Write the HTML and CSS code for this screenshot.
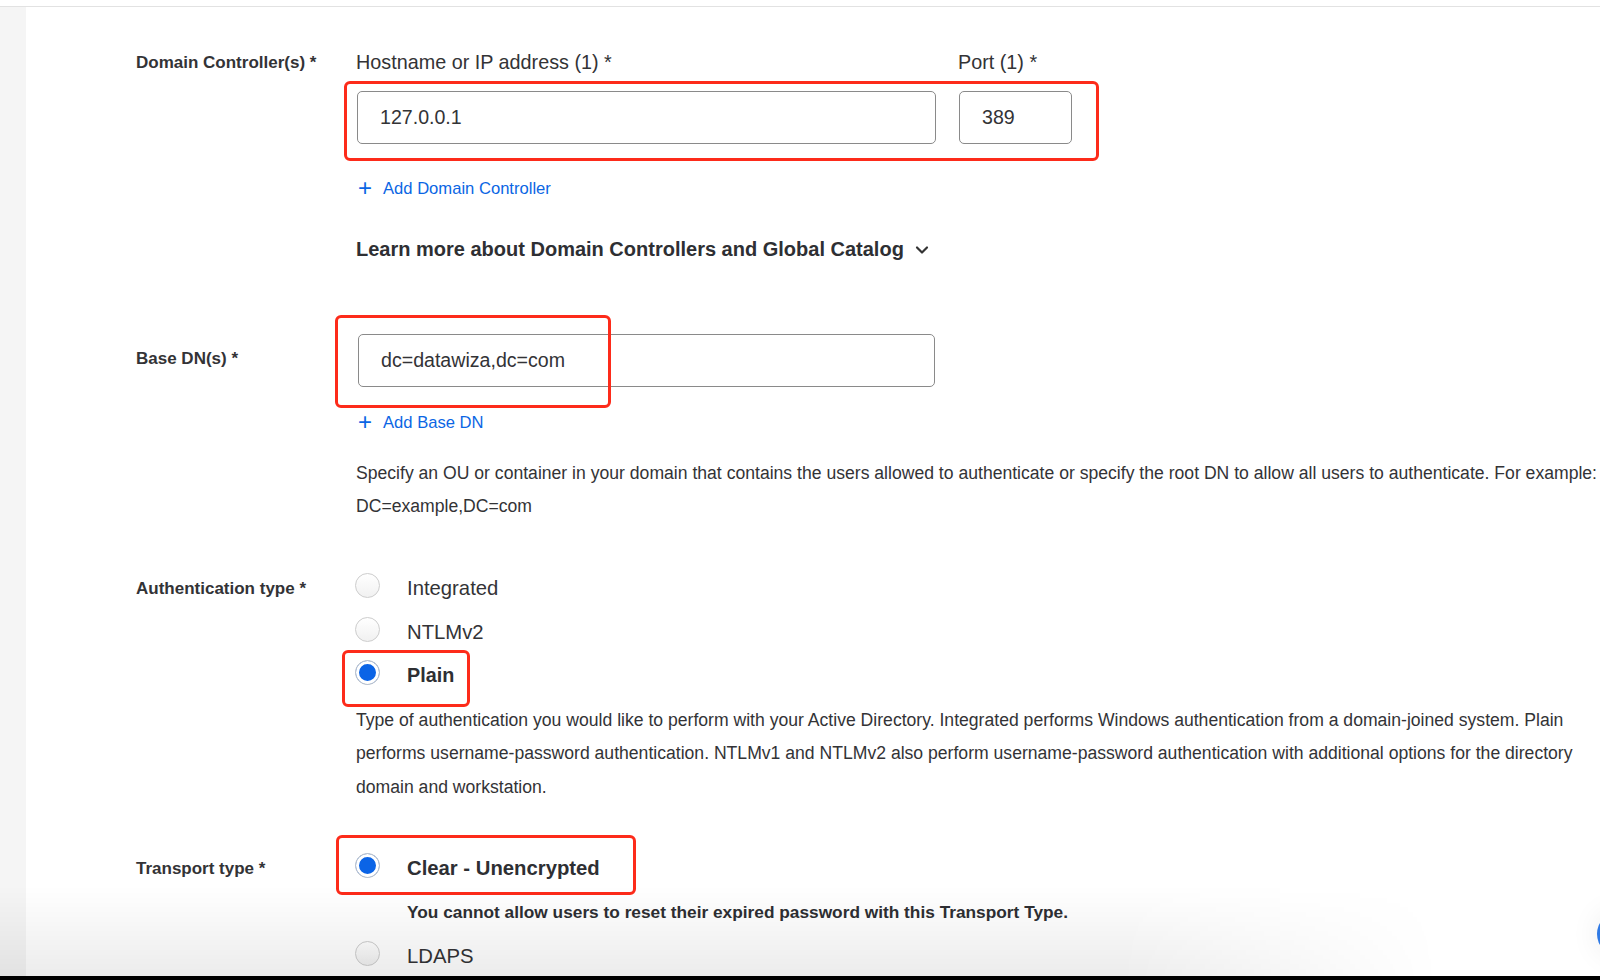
FILE: index.html
```html
<!DOCTYPE html>
<html lang="en">
<head>
<meta charset="utf-8">
<title>Active Directory settings</title>
<link rel="stylesheet" href="styles.css">
</head>
<body>
<div class="screen">
  <div class="topbar"></div>
  <div class="page">
    <aside class="sidebar"></aside>
    <main class="main">
      <form class="form">
        <div class="row row-dc">
          <div class="label label-dc">Domain Controller(s) *</div>
          <div class="field">
            <div class="dc-labels">
              <span class="field-label host-col">Hostname or IP address (1) *</span>
              <span class="field-label port-col">Port (1) *</span>
            </div>
            <div class="dc-inputs">
              <div class="input host-col">127.0.0.1</div>
              <div class="input port-col">389</div>
              <span class="anno anno-dc"></span>
            </div>
            <a class="add-link add-dc"><span class="plus">+</span>Add Domain Controller</a>
            <div class="learn">Learn more about Domain Controllers and Global Catalog
              <svg class="chev" width="14" height="10" viewBox="0 0 14 10"><path d="M2 2.5 L7 7.5 L12 2.5" fill="none" stroke="#333" stroke-width="2.2" stroke-linecap="round" stroke-linejoin="round"/></svg>
            </div>
          </div>
        </div>

        <div class="row row-dn">
          <div class="label label-dn">Base DN(s) *</div>
          <div class="field">
            <div class="dn-wrap">
              <div class="input dn-input">dc=datawiza,dc=com</div>
              <span class="anno anno-dn"></span>
            </div>
            <a class="add-link add-dn"><span class="plus">+</span>Add Base DN</a>
            <p class="help help-dn">Specify an OU or container in your domain that contains the users allowed to authenticate or specify the root DN to allow all users to authenticate. For example: DC=example,DC=com</p>
          </div>
        </div>

        <div class="row row-auth">
          <div class="label label-opt">Authentication type *</div>
          <div class="field">
            <div class="option"><span class="radio"></span><span class="opt-text">Integrated</span></div>
            <div class="option"><span class="radio"></span><span class="opt-text">NTLMv2</span></div>
            <div class="option selected"><span class="radio checked"></span><span class="opt-text">Plain</span><span class="anno anno-plain"></span></div>
            <p class="help help-auth">Type of authentication you would like to perform with your Active Directory. Integrated performs Windows authentication from a domain-joined system. Plain performs username-password authentication. NTLMv1 and NTLMv2 also perform username-password authentication with additional options for the directory domain and workstation.</p>
          </div>
        </div>

        <div class="row row-transport">
          <div class="label label-opt">Transport type *</div>
          <div class="field">
            <div class="option selected"><span class="radio checked"></span><span class="opt-text">Clear - Unencrypted</span><span class="anno anno-clear"></span></div>
            <div class="warning">You cannot allow users to reset their expired password with this Transport Type.</div>
            <div class="option option-last"><span class="radio"></span><span class="opt-text">LDAPS</span></div>
          </div>
        </div>
      </form>
    </main>
  </div>
  <div class="bottom-shade"></div>
  <div class="help-fab"></div>
  <div class="screen-edge"></div>
</div>
</body>
</html>
```

FILE: styles.css
```css
* { box-sizing: border-box; }

html, body {
  margin: 0;
  padding: 0;
  background: #ffffff;
}

body {
  font-family: "Liberation Sans", Arial, Helvetica, sans-serif;
  color: #333336;
}

.screen {
  position: relative;
  width: 1600px;
  height: 980px;
  overflow: hidden;
  background: #ffffff;
}

.topbar {
  height: 7px;
  border-bottom: 1px solid #e2e2e2;
}

.page {
  display: flex;
  height: 973px;
}

.sidebar {
  width: 26px;
  flex: none;
  background: #f5f5f5;
}

.main {
  flex: 1;
  min-width: 0;
}

.form {
  padding: 44px 0 0 110px;
  margin: 0;
}

.row {
  display: grid;
  grid-template-columns: 220px 1fr;
}

.label {
  font-size: 17px;
  font-weight: 700;
  line-height: 22px;
  color: #333336;
}

.label-dc { padding-top: 1px; }

.field {
  min-width: 0;
}

/* Domain controllers */
.dc-labels,
.dc-inputs {
  display: flex;
  gap: 23px;
}

.dc-inputs {
  position: relative;
  margin-top: 18px;
  width: 716px;
}

.field-label {
  font-size: 19.8px;
  line-height: 22px;
  color: #333336;
  white-space: nowrap;
}

.host-col { width: 579px; flex: none; }
.port-col { width: 113px; flex: none; }

.input {
  height: 53px;
  border: 1px solid #8a8a8a;
  border-radius: 5px;
  padding: 0 0 0 22px;
  display: flex;
  align-items: center;
  font-size: 19.6px;
  color: #333336;
  background: #fff;
}

.dc-inputs .host-col { margin-left: 1px; }

.add-link {
  display: flex;
  align-items: center;
  gap: 9px;
  color: #0b66e4;
  font-size: 16.6px;
  line-height: 20px;
  text-decoration: none;
}

.plus {
  font-size: 24px;
  font-weight: 300;
  line-height: 20px;
  width: 16px;
  margin-left: 2px;
  margin-top: -2px;
}

.add-dc { margin-top: 35px; }

.learn {
  margin-top: 38px;
  font-size: 20px;
  font-weight: 700;
  line-height: 24px;
  color: #2e2f33;
  display: flex;
  align-items: center;
  gap: 11px;
  white-space: nowrap;
}

.chev { margin-top: 2px; }

/* Base DN */
.row-dn { margin-top: 73px; }

.label-dn { padding-top: 14px; }

.dn-wrap {
  position: relative;
  width: 579px;
  padding-left: 2px;
}

.dn-input { width: 577px; }

.add-dn { margin-top: 26px; }

.help {
  margin: 0;
  font-size: 17.6px;
  line-height: 33px;
  color: #333336;
  margin-right: -10px;
}

.help-dn { margin-top: 24px; }

/* Options */
.row-auth { margin-top: 44px; }

.label-opt { line-height: 43px; }

.option {
  position: relative;
  display: flex;
  align-items: center;
  height: 43.5px;
  font-size: 20.3px;
  color: #333336;
  white-space: nowrap;
}

.option.selected .opt-text { font-weight: 700; color: #2e2f33; }
.row-auth .option.selected .opt-text { font-size: 19.8px; }

.radio {
  width: 25px;
  height: 25px;
  border-radius: 50%;
  border: 1px solid #cdcdcd;
  background: linear-gradient(#ffffff, #f1f1f1);
  margin-bottom: 6px;
  margin-left: -1px;
  flex: none;
}

.radio.checked {
  background: #0b64e6;
  border-color: #c9c9c9;
  box-shadow: inset 0 0 0 3px #ffffff;
}

.opt-text { margin-left: 27px; }

.help-auth { margin-top: 6px; line-height: 33.5px; }

.row-transport { margin-top: 42px; }
.row-transport .label-opt { line-height: 44px; padding-top: 1px; }
.row-transport .option { height: 44px; }

.warning {
  margin-top: 11px;
  margin-left: 51px;
  font-size: 17.3px;
  font-weight: 700;
  line-height: 22px;
  color: #2e2f33;
  white-space: nowrap;
}

.option-last { margin-top: 11px; }

/* Red annotation boxes drawn over the form */
.anno {
  position: absolute;
  border: 3px solid #fd2b1a;
  border-radius: 6px;
  pointer-events: none;
}

.anno-dc { left: -12px; top: -10px; right: -27px; bottom: -17px; }
.anno-dn { left: -21px; top: -19px; width: 276px; height: 93px; }
.anno-plain { left: -14px; top: -4px; width: 128px; height: 57px; }
.anno-clear { left: -20px; top: -11px; width: 300px; height: 60px; }

/* Screen capture artifacts */
.bottom-shade {
  position: absolute;
  left: 0;
  right: 0;
  bottom: 4px;
  height: 90px;
  background: linear-gradient(to bottom, rgba(0,0,0,0), rgba(0,0,0,0.075));
  -webkit-mask-image: linear-gradient(to right, #000 0%, #000 70%, transparent 90%);
  mask-image: linear-gradient(to right, #000 0%, #000 70%, transparent 90%);
  pointer-events: none;
}

.help-fab {
  position: absolute;
  left: 1597px;
  top: 912px;
  width: 44px;
  height: 44px;
  border-radius: 50%;
  background: #2f7ae5;
  box-shadow: 0 0 30px rgba(0,0,0,0.08);
}

.screen-edge {
  position: absolute;
  left: 0;
  right: 0;
  bottom: 0;
  height: 4px;
  background: #000;
}
```
